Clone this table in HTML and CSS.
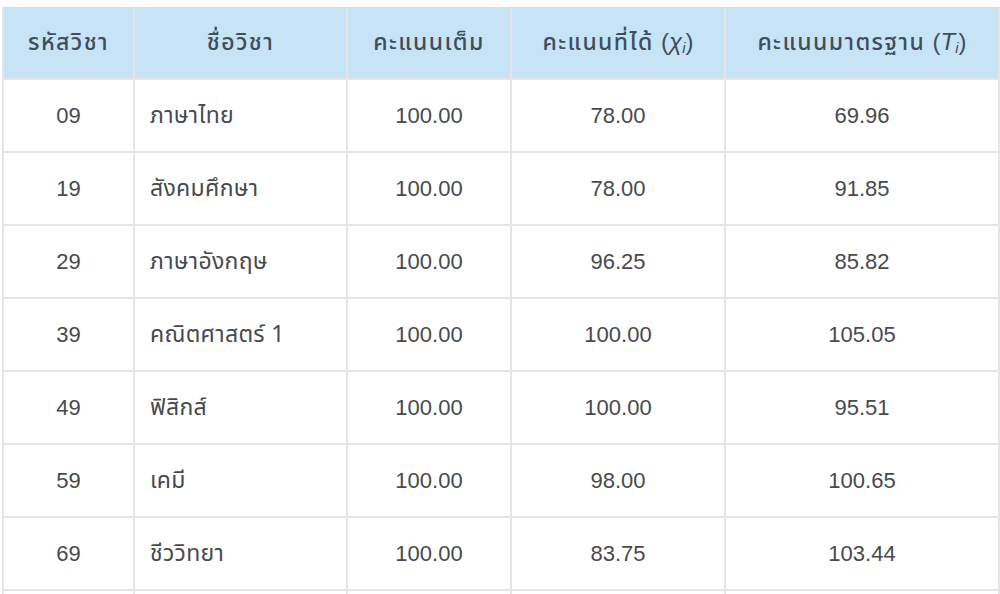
FILE: index.html
```html
<!DOCTYPE html>
<html lang="th">
<head>
<meta charset="utf-8">
<link rel="stylesheet" href="styles.css">
</head>
<body>
<div class="wrap">
<table class="scores">
  <colgroup>
    <col class="c1"><col class="c2"><col class="c3"><col class="c4"><col class="c5">
  </colgroup>
  <thead>
    <tr>
      <th>รหัสวิชา</th>
      <th>ชื่อวิชา</th>
      <th>คะแนนเต็ม</th>
      <th>คะแนนที่ได้ <span class="math">(<i>χ<sub>i</sub></i>)</span></th>
      <th>คะแนนมาตรฐาน <span class="math">(<i>T<sub>i</sub></i>)</span></th>
    </tr>
  </thead>
  <tbody>
    <tr><td>09</td><td class="name">ภาษาไทย</td><td>100.00</td><td>78.00</td><td>69.96</td></tr>
    <tr><td>19</td><td class="name">สังคมศึกษา</td><td>100.00</td><td>78.00</td><td>91.85</td></tr>
    <tr><td>29</td><td class="name">ภาษาอังกฤษ</td><td>100.00</td><td>96.25</td><td>85.82</td></tr>
    <tr><td>39</td><td class="name">คณิตศาสตร์ 1</td><td>100.00</td><td>100.00</td><td>105.05</td></tr>
    <tr><td>49</td><td class="name">ฟิสิกส์</td><td>100.00</td><td>100.00</td><td>95.51</td></tr>
    <tr><td>59</td><td class="name">เคมี</td><td>100.00</td><td>98.00</td><td>100.65</td></tr>
    <tr><td>69</td><td class="name">ชีววิทยา</td><td>100.00</td><td>83.75</td><td>103.44</td></tr>
    <tr><td></td><td class="name"></td><td></td><td></td><td></td></tr>
  </tbody>
</table>
</div>
</body>
</html>
```
FILE: styles.css
```css
html, body {
  margin: 0;
  padding: 0;
  background: #ffffff;
}
.wrap {
  padding: 7px 2px 0 2px;
}
.scores {
  border-collapse: collapse;
  table-layout: fixed;
  width: 996px;
  font-family: "Liberation Sans", "Noto Sans Thai", "Noto Sans", sans-serif;
  font-size: 22px;
  color: #474a4e;
}
.c1 { width: 131px; }
.c2 { width: 213px; }
.c3 { width: 164px; }
.c4 { width: 214px; }
.c5 { width: 274px; }
.scores th,
.scores td {
  border: 2px solid #e3e5e8;
  height: 71px;
  padding: 0;
  text-align: center;
  vertical-align: middle;
}
.scores th {
  background: #c7e4f7;
  color: #3e4f5b;
  font-family: "Noto Sans Thai", "Noto Sans", sans-serif;
  font-weight: 500;
  font-size: 23px;
  letter-spacing: 1.4px;
  border-top: 0;
}
.scores td.name {
  text-align: left;
  padding-left: 15px;
  font-family: "Noto Sans Thai", "Noto Sans", sans-serif;
  font-size: 23px;
  letter-spacing: 0.3px;
}
.math {
  font-family: "Liberation Sans", sans-serif;
  font-weight: 400;
  font-size: 24px;
  letter-spacing: 0;
}
.math i {
  font-style: italic;
}
.math sub {
  font-size: 15px;
  vertical-align: -3px;
  line-height: 0;
}
```
